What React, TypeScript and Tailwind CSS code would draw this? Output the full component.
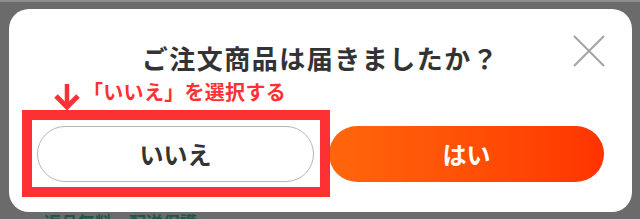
import React from 'react';

const jp = { fontFamily: '"Noto Sans CJK JP", "Noto Sans", sans-serif' };

export default function App() {
  return (
    <div className="relative h-[219px] w-[640px] overflow-hidden bg-[#6b6b6b]" style={jp}>
      <div className="h-[2px] w-full bg-[#8e8e8e]" />
      {/* page behind overlay */}
      <div className="absolute left-[44px] top-[213px] text-[17px] font-bold leading-none text-[#1d5548]">
        返品無料・配送保護
      </div>

      <div className="relative ml-[9px] mt-[7px] flex h-[203px] w-[623px] flex-col items-center rounded-[20px] bg-white">
        <h2 className="pt-[32px] text-[26px] font-bold leading-[34px] tracking-[1.5px] text-[#333]">
          ご注文商品は届きましたか？
        </h2>
        <button className="absolute left-[563px] top-[25px] flex h-[34px] w-[34px] items-center justify-center">
          <svg width="34" height="34" viewBox="0 0 34 34">
            <path d="M2 2 L32 32 M32 2 L2 32" stroke="#a3a3a3" strokeWidth="2" fill="none" />
          </svg>
        </button>
        <div className="mt-[51px] flex w-full gap-[15px] px-[28px]">
          <button className="flex h-[56px] flex-1 items-center justify-center rounded-full border-[1.5px] border-[#b5b5b5] bg-white text-[24px] font-bold text-[#333]">
            いいえ
          </button>
          <button className="flex h-[56px] flex-1 items-center justify-center rounded-full bg-gradient-to-r from-[#ff660c] to-[#ff3300] text-[24px] font-bold text-white">
            はい
          </button>
        </div>
      </div>

      {/* annotation */}
      <svg className="absolute left-[53px] top-[83px]" width="28" height="28" viewBox="0 0 28 28">
        <path d="M14 1 L14 24" stroke="#fd3133" strokeWidth="4.5" />
        <path d="M3 13 L14 24 L25 13" stroke="#fd3133" strokeWidth="5" fill="none" />
      </svg>
      <div className="absolute left-[83px] top-[79px] text-[20px] font-bold leading-[26px] tracking-[0.3px] text-[#fd3133]">
        「いいえ」を選択する
      </div>
      <div className="absolute left-[22px] top-[110px] h-[87px] w-[308px] border-[10px] border-[#fd3133]" />
    </div>
  );
}
